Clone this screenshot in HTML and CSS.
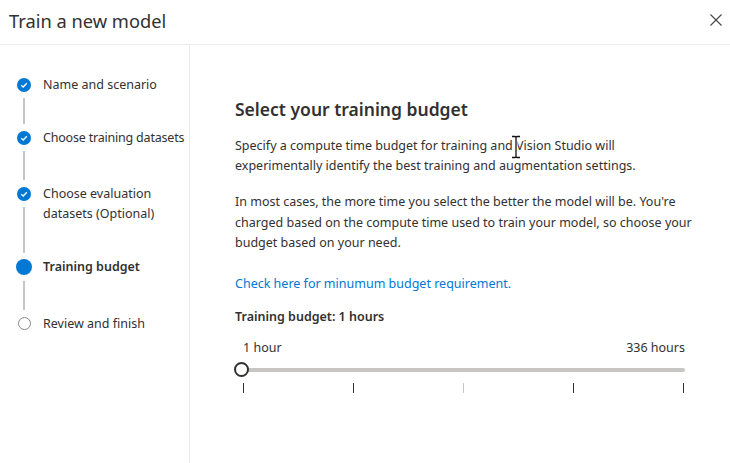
FILE: index.html
```html
<!DOCTYPE html>
<html>
<head>
<meta charset="utf-8">
<link rel="stylesheet" href="styles.css">
</head>
<body>
<div class="dialog">
  <header class="header">
    <h1 class="title">Train a new model</h1>
    <button class="close" aria-label="Close">
      <svg width="12" height="12" viewBox="0 0 12 12"><path d="M0.5 0.5 L11.5 11.5 M11.5 0.5 L0.5 11.5" stroke="#444" stroke-width="1.1" fill="none"/></svg>
    </button>
  </header>
  <div class="body">
    <nav class="steps">
      <div class="step s1">
        <div class="rail"><span class="dot check"><svg width="8" height="8" viewBox="0 0 8 8"><path d="M1.3 4.2 L3.2 6 L6.8 2.2" stroke="#fff" stroke-width="1.3" fill="none"/></svg></span><span class="line"></span></div>
        <div class="label">Name and scenario</div>
      </div>
      <div class="step s2">
        <div class="rail"><span class="dot check"><svg width="8" height="8" viewBox="0 0 8 8"><path d="M1.3 4.2 L3.2 6 L6.8 2.2" stroke="#fff" stroke-width="1.3" fill="none"/></svg></span><span class="line"></span></div>
        <div class="label">Choose training datasets</div>
      </div>
      <div class="step s3">
        <div class="rail"><span class="dot check"><svg width="8" height="8" viewBox="0 0 8 8"><path d="M1.3 4.2 L3.2 6 L6.8 2.2" stroke="#fff" stroke-width="1.3" fill="none"/></svg></span><span class="line"></span></div>
        <div class="label">Choose evaluation datasets (Optional)</div>
      </div>
      <div class="step s4">
        <div class="rail"><span class="dot filled"></span><span class="line"></span></div>
        <div class="label">Training budget</div>
      </div>
      <div class="step s5">
        <div class="rail"><span class="dot empty"></span></div>
        <div class="label">Review and finish</div>
      </div>
    </nav>
    <main class="content">
      <h2 class="heading">Select your training budget</h2>
      <p class="para p1">Specify a compute time budget for training and Vision Studio will experimentally identify the best training and augmentation settings.</p>
      <p class="para p2">In most cases, the more time you select the better the model will be. You're charged based on the compute time used to train your model, so choose your budget based on your need.</p>
      <a class="link" href="#">Check here for minumum budget requirement.</a>
      <div class="budget-label">Training budget: 1 hours</div>
      <div class="slider">
        <div class="range-labels"><span>1 hour</span><span>336 hours</span></div>
        <div class="track"><span class="thumb"></span></div>
        <div class="ticks"><span class="tick"></span><span class="tick"></span><span class="tick light"></span><span class="tick"></span><span class="tick"></span></div>
      </div>
      <svg class="cursor" width="10" height="24" viewBox="0 0 10 24"><path d="M1 1.5 H4 Q5 1.5 5 2.5 Q5 1.5 6 1.5 H9 M5 2.5 V21.5 M1 22.5 H4 Q5 22.5 5 21.5 Q5 22.5 6 22.5 H9" stroke="#fff" stroke-width="3" fill="none"/><path d="M1 1.5 H4 Q5 1.5 5 2.5 Q5 1.5 6 1.5 H9 M5 2.5 V21.5 M1 22.5 H4 Q5 22.5 5 21.5 Q5 22.5 6 22.5 H9" stroke="#111" stroke-width="1.3" fill="none"/></svg>
    </main>
  </div>
</div>
</body>
</html>
```
FILE: styles.css
```css
* { box-sizing: border-box; }
html, body { margin: 0; padding: 0; background: #fff; }
body {
  width: 730px; height: 463px; overflow: hidden;
  font-family: "Noto Sans", "Open Sans", sans-serif;
  color: #323130;
}
.dialog { display: flex; flex-direction: column; height: 463px; }
.header {
  height: 45px; flex: none;
  display: flex; align-items: center; justify-content: space-between;
  border-bottom: 1px solid #edebe9;
  padding: 0 7px 0 9px;
}
.title { margin: 0; font-size: 18.3px; font-weight: 400; color: #323130; position: relative; top: -2px; }
.close { border: 0; background: none; padding: 0; width: 14px; height: 14px; display: flex; align-items: center; justify-content: center; position: relative; top: -2px; }
.body { flex: 1; display: flex; min-height: 0; }
.steps {
  width: 190px; flex: none;
  border-right: 1px solid #edebe9;
  padding: 30px 0 0 17px;
  display: flex; flex-direction: column;
}
.step { display: flex; gap: 12px; }
.rail { width: 14px; flex: none; display: flex; flex-direction: column; align-items: center; padding-top: 3px; }
.rail .dot { width: 14px; height: 14px; border-radius: 50%; flex: none; display: flex; align-items: center; justify-content: center; }
.dot.check, .dot.filled { background: #0078d4; }
.dot.filled { width: 16px; height: 16px; margin-top: -1px; }
.dot.empty { border: 1.5px solid #8a8886; width: 13px; height: 13px; }
.rail .line { width: 2px; background: #c8c6c4; flex: 1; margin-top: 6px; margin-bottom: 4px; }
.label { font-size: 12.5px; line-height: 20px; width: 146px; color: #323130; }
.s2 .label { white-space: nowrap; letter-spacing: -0.2px; }
.s1 { height: 53px; }
.s2 { height: 56px; }
.s3 { height: 73px; }
.s4 { height: 57px; }
.s4 .label { font-weight: 600; }
.content { flex: 1; padding: 52px 0 0 45px; position: relative; }
.heading { margin: 0 0 15px; font-size: 17.5px; font-weight: 600; color: #323130; line-height: 24px; }
.para { margin: 0; font-size: 12.5px; line-height: 20px; width: 460px; }
.p1 { line-height: 19.5px; }
.p2 { margin-top: 17px; line-height: 20.5px; }
.link { display: block; color: #0078d4; text-decoration: none; font-size: 12.5px; line-height: 20px; margin-top: 20px; }
.budget-label { font-size: 12.5px; font-weight: 600; line-height: 20px; margin-top: 13px; }
.slider { width: 450px; margin-top: 11px; }
.range-labels { display: flex; justify-content: space-between; font-size: 12.5px; line-height: 20px; padding: 0 0 0 8px; }
.track { height: 4px; background: #c8c6c4; border-radius: 2px; margin: 10px 0 0 7px; position: relative; }
.thumb { position: absolute; left: -8px; top: -6px; width: 15px; height: 15px; border-radius: 50%; border: 2px solid #323130; background: #fff; }
.ticks { display: flex; justify-content: space-between; margin: 11px 1px 0 8px; }
.tick { width: 1px; height: 10px; background: #323130; }
.tick.light { background: #c8c6c4; }
.cursor { position: absolute; left: 321px; top: 90px; }
```
